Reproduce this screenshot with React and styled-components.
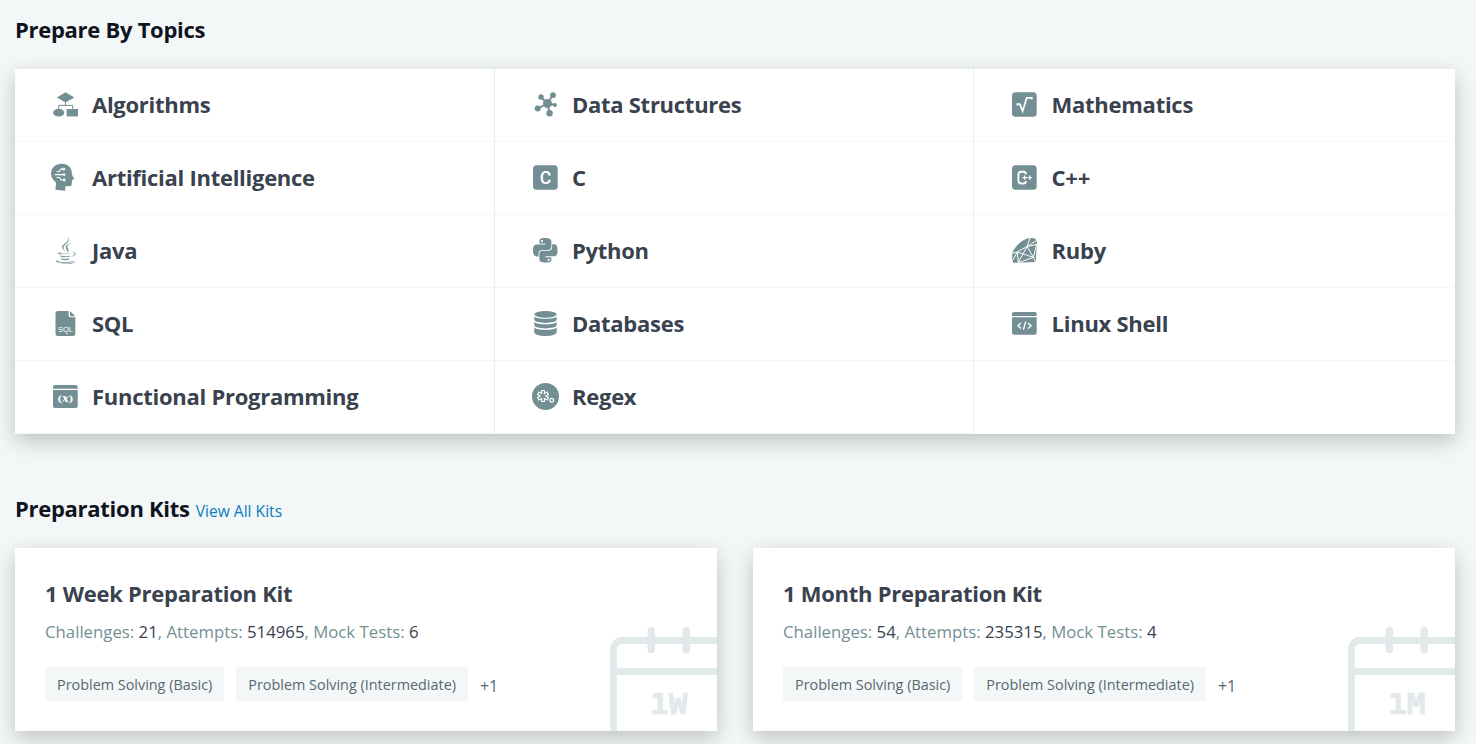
import React from "react";
import styled, { createGlobalStyle } from "styled-components";
import { FaJava } from "react-icons/fa";
import { SiPython } from "react-icons/si";

const TEAL = "#738f93";

const GlobalStyle = createGlobalStyle`
  * { box-sizing: border-box; }
  body {
    margin: 0;
    background: #f3f7f7;
    font-family: "Open Sans", sans-serif;
    color: #39424e;
    overflow: hidden;
  }
`;

const Page = styled.main`
  height: 744px;
  padding: 15px 21px 0 15px;
  overflow: hidden;
`;

const SectionHead = styled.header`
  display: flex;
  align-items: baseline;
  gap: 6px;
  height: 30px;
  margin-bottom: 24px;
`;

const SectionTitle = styled.h2`
  margin: 0;
  font-size: 22px;
  line-height: 28px;
  letter-spacing: -0.28px;
  font-weight: 700;
  color: #0e141e;
`;

const ViewAll = styled.a`
  font-size: 15.6px;
  line-height: 24px;
  color: #097bbf;
  text-decoration: none;
`;

const TopicGrid = styled.section`
  display: grid;
  grid-template-columns: 480px 479px 479px;
  grid-auto-rows: 73px;
  background: #fff;
  box-shadow: 0 7px 20px rgba(0, 0, 0, 0.22);
  margin-bottom: 60px;
`;

const Topic = styled.div`
  display: flex;
  align-items: center;
  padding-left: 35px;
  border-bottom: 1px solid #f3f7f7;
  border-right: ${(p) => (p.$last ? "0" : "1px solid #e7eeef")};
`;

const IconBox = styled.span`
  display: flex;
  width: 30px;
  height: 30px;
  margin-right: ${(p) => (p.$wide ? "12.6px" : "12px")};
  color: ${TEAL};
  flex: none;
`;

const TopicName = styled.span`
  margin-top: -2px;
  font-size: 22px;
  line-height: 30px;
  letter-spacing: -0.27px;
  font-weight: 700;
  color: #39424e;
`;

const KitGrid = styled.section`
  display: grid;
  grid-template-columns: 702px 702px;
  gap: 36px;
`;

const KitCard = styled.article`
  position: relative;
  height: 183px;
  padding: 29px 30px 0;
  background: #fff;
  box-shadow: 0 7px 20px rgba(0, 0, 0, 0.22);
`;

const KitTitle = styled.h3`
  margin: 0 0 9px;
  font-size: 22px;
  line-height: 32px;
  letter-spacing: -0.27px;
  font-weight: 700;
  color: #39424e;
`;

const Stats = styled.p`
  margin: 0 0 21px;
  font-size: 16.77px;
  line-height: 28px;
  color: #738f93;
`;

const Value = styled.span`
  color: #39424e;
`;

const Tags = styled.div`
  display: flex;
  align-items: flex-start;
  gap: 12px;
`;

const Tag = styled.span`
  height: 34px;
  padding: 0 12px;
  line-height: 35px;
  font-size: 14.4px;
  color: #576871;
  background: #f3f7f7;
`;

const More = styled.span`
  font-size: 16px;
  line-height: 38px;
  color: #576871;
`;

const Calendar = styled.svg`
  position: absolute;
  right: 0;
  bottom: 0;
  width: 107px;
  height: 105px;
`;

const Svg = ({ children }) => (
  <svg width="30" height="30" viewBox="0 0 30 30" fill="currentColor">
    {children}
  </svg>
);

const ASTERISK = "M13 9.9v8.200M9.450 11.950l7.100 4.100M9.450 16.050l7.100-4.100";

const icons = {
  algorithms: (
    <Svg>
      <path d="M15.5 2.3 24.3 7.4 15.5 12.5 6.9 7.4z" />
      <path d="M15.5 12v3.4M8.7 19.5v-4.1h14V19.5" fill="none" stroke="currentColor" strokeWidth="1" />
      <ellipse cx="8.7" cy="22.7" rx="5.6" ry="3.9" />
      <path d="M16.6 19H28v7.4H16.6z" />
    </Svg>
  ),
  ai: (
    <Svg>
      <path d="M12 .8C18 .8 22 5 21.8 10.2c0 1.2.5 2 1 3.1l1.1 2c.3.6 0 .9-.5 1.1l-1.4.5-.3 4.6c-.1 1.4-.8 1.9-2.2 1.7l-3.9-.3-.6 4.900-9.6-1.1.7-7.2C3 17 1 14.5 1 10.6 1 4.8 5.6.8 12 .8z" />
      <g fill="none" stroke="#fff" strokeWidth="1.1">
        <path d="M5 11.600h8.200M6.500 8.700h2.700l1.600-2.600h2M6.500 14.500h3l1.600 2.500h2.400" />
        <circle cx="13.700" cy="6.200" r=".9" />
        <circle cx="14.100" cy="11.600" r=".9" />
        <circle cx="14.200" cy="17" r=".9" />
      </g>
    </Svg>
  ),
  java: (
    <Svg>
      <g stroke="currentColor" strokeWidth="8">
        <FaJava x="2.300" y="1.300" size={26.7} />
      </g>
    </Svg>
  ),
  sql: (
    <Svg>
      <path d="M8 2h10.600v4.300a2 2 0 0 0 2 2h4.700v16.300a2.500 2.500 0 0 1-2.500 2.500H8a2.500 2.500 0 0 1-2.500-2.500V4.500A2.500 2.500 0 0 1 8 2z" />
      <path d="M20 2l5.300 5.200H21a1 1 0 0 1-1-1z" />
      <text x="15.400" y="23.300" fontSize="8" fontFamily="Liberation Sans, sans-serif" textAnchor="middle" textLength="15" lengthAdjust="spacingAndGlyphs" fill="#fff">SQL</text>
    </Svg>
  ),
  functional: (
    <Svg>
      <path d="M3 6.700V5a2 2 0 0 1 2-2h20.700a2 2 0 0 1 2 2v1.700zM3 8h24.700v16a2 2 0 0 1-2 2H5a2 2 0 0 1-2-2z" />
      <text x="15.400" y="20" fontSize="11.500" fontFamily="DejaVu Serif, serif" fontWeight="700" textAnchor="middle" fill="#fff">
        <tspan fontSize="10">(</tspan><tspan fontStyle="italic">x</tspan><tspan fontSize="10">)</tspan>
      </text>
    </Svg>
  ),
  structures: (
    <Svg>
      <path d="M17.300 13.500 11 7M17.300 13.500 23 5M17.300 13.500l7.400 1.200M17.300 13.500l2.400 9.800M17.300 13.500 7.700 18.700" stroke="currentColor" strokeWidth="1.900" />
      <circle cx="17.500" cy="13.500" r="4.500" />
      <circle cx="11" cy="7" r="2.700" />
      <circle cx="23" cy="5.200" r="2.900" />
      <circle cx="24.900" cy="14.900" r="2" />
      <circle cx="19.600" cy="23.200" r="3.200" />
      <circle cx="7.700" cy="18.600" r="3" />
    </Svg>
  ),
  c: (
    <Svg>
      <rect x="3" y="2.200" width="24.700" height="24.500" rx="3.500" />
      <text x="15.500" y="20.800" fontSize="18.500" fontFamily="Roboto, sans-serif" fontWeight="500" textAnchor="middle" textLength="11.500" lengthAdjust="spacingAndGlyphs" fill="#fff">C</text>
    </Svg>
  ),
  python: (
    <Svg>
      <SiPython x="3" y="2" size={24.7} />
    </Svg>
  ),
  databases: (
    <Svg>
      <ellipse cx="15.500" cy="5.300" rx="11.200" ry="3.400" />
      <path d="M4.300 7.400c2.500 3.200 19.900 3.200 22.400 0v3.200c0 4.400-22.400 4.400-22.400 0z" />
      <path d="M4.300 12.900c2.500 3.200 19.900 3.200 22.400 0v3.200c0 4.400-22.400 4.400-22.400 0z" />
      <path d="M4.300 18.500c2.500 3.200 19.900 3.200 22.400 0v4.400c0 5.400-22.400 5.400-22.400 0z" />
    </Svg>
  ),
  regex: (
    <Svg>
      <circle cx="15.500" cy="14.400" r="13.500" />
      <path d={ASTERISK} stroke="#fff" strokeWidth="3.900" strokeLinecap="square" fill="none" />
      <path d={ASTERISK} stroke="currentColor" strokeWidth="1.700" strokeLinecap="square" fill="none" />
      <circle cx="21.700" cy="18.300" r="1.900" fill="none" stroke="#fff" strokeWidth="1.200" />
    </Svg>
  ),
  math: (
    <Svg>
      <rect x="3" y="2.200" width="24.700" height="24.500" rx="3.500" />
      <path d="M8.300 15.400v-1.200h2.600l2.700 7L17.700 7.900h5.100v1.500" fill="none" stroke="#fff" strokeWidth="1.700" />
    </Svg>
  ),
  cpp: (
    <Svg>
      <rect x="3" y="2.200" width="24.700" height="24.500" rx="3.500" />
      <path d="M17 11.200a2.600 2.600 0 0 0-2.600-2.400h-2a3 3 0 0 0-3 3v5.700a3 3 0 0 0 3 3h2a2.600 2.600 0 0 0 2.600-2.400" fill="none" stroke="#fff" strokeWidth="1.900" />
      <path d="M13.500 14.600h4.400M15.700 12.400v4.400M18.600 14.600h4.200M20.700 12.500v4.200" stroke="#fff" strokeWidth="1.300" />
    </Svg>
  ),
  ruby: (
    <Svg>
      <path d="M16 3.600C18.500 2.200 22 1.800 24.300 2.200c2.700.5 3.700 2 3.600 4.500L26.700 26 5.500 26.800C3.600 26.800 3 25 3.100 22.800L3.300 17.500C4.500 12.500 10.500 6 16 3.600z" />
      <path d="M3.300 17.300 8.200 16 18 10.600 21 2M18 10.600l9.800-2.200M18 10.600l-8.800 16M8.200 16l1.200 10.800M8.200 16l16.300 5.400L27.500 8.600M18 10.600l6.500 10.800 2.300 5M24.500 21.400 9.400 26.700M8.200 16 3.400 24.800M18 10.600l9.700-6.100" fill="none" stroke="#fff" strokeWidth="1" />
    </Svg>
  ),
  linux: (
    <Svg>
      <path d="M3 6.900V5a2 2 0 0 1 2-2h20.700a2 2 0 0 1 2 2v1.900zM3 8.200h24.700v15.600a2 2 0 0 1-2 2H5a2 2 0 0 1-2-2z" />
      <path d="M12 14l-3.100 2.700L12 19.400M19 14l3.100 2.700L19 19.400M16.700 12.600l-2.300 8.200" fill="none" stroke="#fff" strokeWidth="1.300" />
    </Svg>
  ),
};

const topics = [
  ["Algorithms", "algorithms"],
  ["Data Structures", "structures"],
  ["Mathematics", "math"],
  ["Artificial Intelligence", "ai"],
  ["C", "c"],
  ["C++", "cpp"],
  ["Java", "java"],
  ["Python", "python"],
  ["Ruby", "ruby"],
  ["SQL", "sql"],
  ["Databases", "databases"],
  ["Linux Shell", "linux"],
  ["Functional Programming", "functional"],
  ["Regex", "regex"],
];

const kits = [
  { title: "1 Week Preparation Kit", label: "1W", challenges: 21, attempts: 514965, mocks: 6 },
  { title: "1 Month Preparation Kit", label: "1M", challenges: 54, attempts: 235315, mocks: 4 },
];

function Kit({ kit }) {
  return (
    <KitCard>
      <KitTitle>{kit.title}</KitTitle>
      <Stats>
        Challenges: <Value>{kit.challenges}</Value>, Attempts: <Value>{kit.attempts}</Value>, Mock Tests:{" "}
        <Value>{kit.mocks}</Value>
      </Stats>
      <Tags>
        <Tag>Problem Solving (Basic)</Tag>
        <Tag>Problem Solving (Intermediate)</Tag>
        <More>+1</More>
      </Tags>
      <Calendar viewBox="0 0 107 105">
        <g fill="none" stroke="#e1e9ea">
          <path d="M3.500 106V23a8.500 8.500 0 0 1 8.500-8.500h96M3.500 45.700H108" strokeWidth="6.800" />
          <path d="M41.300 4.700v18.800M76.300 4.700v18.800" strokeWidth="7.600" strokeLinecap="round" />
        </g>
        <text x="40" y="87.800" fontSize="28.500" fontWeight="700" fontFamily="DejaVu Sans Mono, monospace" textLength="37.500" lengthAdjust="spacingAndGlyphs" fill="#e1e9ea" stroke="#e1e9ea" strokeWidth=".7">
          {kit.label}
        </text>
      </Calendar>
    </KitCard>
  );
}

export default function App() {
  return (
    <>
      <GlobalStyle />
      <Page>
        <SectionHead>
          <SectionTitle>Prepare By Topics</SectionTitle>
        </SectionHead>
        <TopicGrid>
          {topics.map(([name, icon], i) => (
            <Topic key={name} $last={i % 3 === 2}>
              <IconBox $wide={i % 3 === 2}>{icons[icon]}</IconBox>
              <TopicName>{name}</TopicName>
            </Topic>
          ))}
        </TopicGrid>
        <SectionHead>
          <SectionTitle>Preparation Kits</SectionTitle>
          <ViewAll>View All Kits</ViewAll>
        </SectionHead>
        <KitGrid>
          {kits.map((kit) => (
            <Kit key={kit.label} kit={kit} />
          ))}
        </KitGrid>
      </Page>
    </>
  );
}
